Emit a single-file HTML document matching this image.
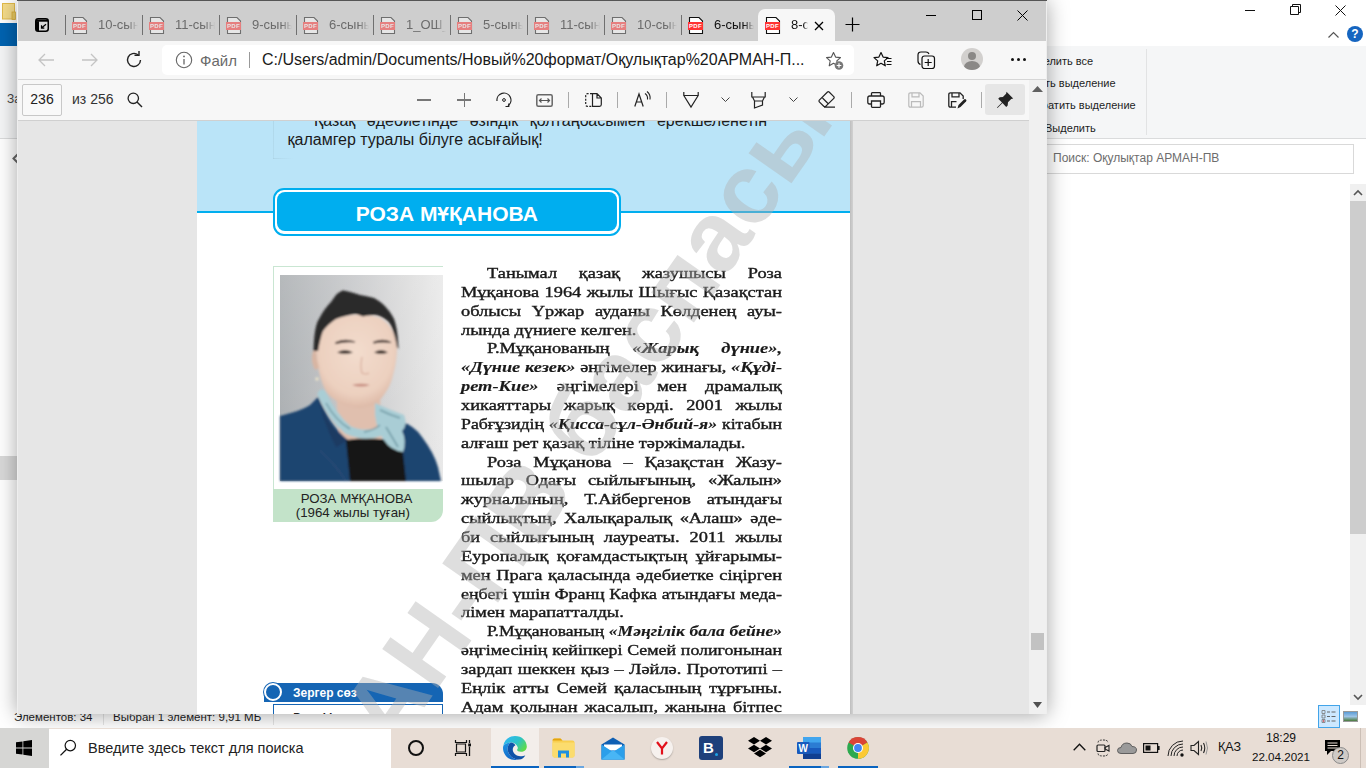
<!DOCTYPE html>
<html><head><meta charset="utf-8"><style>
*{margin:0;padding:0;box-sizing:border-box}
html,body{width:1366px;height:768px;overflow:hidden;background:#fff;font-family:"Liberation Sans",sans-serif;position:relative}
.abs{position:absolute}
svg{position:absolute;overflow:visible}
.sep{position:absolute;width:1px;background:#707070}
.tabt{position:absolute;font-size:13px;white-space:nowrap;overflow:hidden;-webkit-mask-image:linear-gradient(90deg,#000 75%,transparent 100%)}
.bl{position:absolute;font-family:'Liberation Serif',serif;font-size:15.5px;line-height:normal;white-space:nowrap;color:#1a1a1a;transform-origin:0 0;-webkit-text-stroke:0.4px #1a1a1a}
.bl b{-webkit-text-stroke:0.15px #1a1a1a}
.il{position:absolute;font-size:16px;line-height:normal;white-space:nowrap;color:#1a1a1a}
.rtxt{font-size:12px;color:#1e1e1e;position:absolute;white-space:nowrap}
</style></head><body>

<!-- explorer left strip -->
<svg style="left:2px;top:3px" width="14" height="17" viewBox="0 0 14 17"><rect x="0.5" y="0.5" width="12" height="15.5" fill="#f5dc8a" stroke="#e2bb4a"/><rect x="10" y="9" width="3.5" height="7.5" fill="#eacb62" stroke="#d9ad3a" stroke-width="0.8"/></svg>
<div class="abs" style="left:0;top:23px;width:17px;height:23px;background:#0063b1"></div>
<div class="abs" style="left:0;top:46px;width:1366px;height:92px;background:#f5f6f7"></div>
<div class="abs" style="left:0;top:138px;width:1366px;height:1px;background:#dadbdc"></div>
<div class="abs" style="left:7px;top:92px;font-size:12px;color:#444;white-space:nowrap">За</div>
<svg style="left:12px;top:153px" width="7" height="11" viewBox="0 0 7 11"><path d="M6 1L1.5 5.5 6 10" stroke="#666" stroke-width="2" fill="none"/></svg>
<div class="abs" style="left:0;top:456px;width:17px;height:24px;background:#d9d9d9"></div>
<!-- explorer right -->
<div class="abs" style="left:1245px;top:10px;width:10px;height:1px;background:#111"></div>
<svg style="left:1290px;top:4px" width="11" height="11" viewBox="0 0 11 11"><path d="M0.5 2.5h8v8h-8z M2.5 2.5v-2h8v8h-2" stroke="#111" stroke-width="1" fill="none"/></svg>
<svg style="left:1335px;top:5px" width="11" height="11" viewBox="0 0 11 11"><path d="M0.5 0.5l10 10M10.5 0.5l-10 10" stroke="#111" stroke-width="1"/></svg>
<svg style="left:1328px;top:31px" width="11" height="7" viewBox="0 0 11 7"><path d="M0.5 6.5l5-5 5 5" stroke="#555" stroke-width="1.2" fill="none"/></svg>
<div class="abs" style="left:1347px;top:26px;width:16px;height:16px;border-radius:50%;background:#1565c0;color:#fff;font:bold 12px 'Liberation Sans',sans-serif;text-align:center;line-height:16px">?</div>
<div class="rtxt" style="left:1022px;top:55px;font-size:11px">Выделить все</div>
<div class="rtxt" style="left:1025px;top:77px;font-size:11px">Снять выделение</div>
<div class="rtxt" style="left:1027px;top:99px;font-size:11px">Обратить выделение</div>
<div class="rtxt" style="left:1045px;top:122px;font-size:11px">Выделить</div>
<div class="abs" style="left:1146px;top:49px;width:1px;height:86px;background:#e2e3e4"></div>
<div class="abs" style="left:1040px;top:144px;width:314px;height:30px;border:1px solid #d9d9d9;background:#fff"></div>
<div class="abs" style="left:1053px;top:151px;font-size:12px;color:#6d6d6d;white-space:nowrap">Поиск: Оқулықтар АРМАН-ПВ</div>
<div class="abs" style="left:1350px;top:184px;width:16px;height:521px;background:#f0f0f0"></div>
<div class="abs" style="left:1350px;top:201px;width:16px;height:333px;background:#cdcdcd"></div>
<svg style="left:1353px;top:189px" width="10" height="7" viewBox="0 0 10 7"><path d="M1 6l4-4 4 4" stroke="#555" stroke-width="1.6" fill="none"/></svg>
<svg style="left:1353px;top:694px" width="10" height="7" viewBox="0 0 10 7"><path d="M1 1l4 4 4-4" stroke="#555" stroke-width="1.6" fill="none"/></svg>
<div class="abs" style="left:1318px;top:705px;width:22px;height:23px;background:#cce8ff;border:1px solid #42a4e9"></div>
<svg style="left:1321px;top:709px" width="16" height="15" viewBox="0 0 16 15"><path d="M1 1.5h3v3H1zM1 6h3v3H1zM1 10.5h3v3H1z" fill="none" stroke="#777" stroke-width="0.8"/><path d="M6 3h3M10.5 3h4M6 7.5h3M10.5 7.5h4M6 12h3M10.5 12h4" stroke="#666" stroke-width="1"/><rect x="1.8" y="11.3" width="1.4" height="1.4" fill="#d33"/></svg>
<div class="abs" style="left:1343px;top:711px;width:15px;height:11px;border:1px solid #999;background:linear-gradient(#5b9bd5 0,#9dc3e6 50%,#4a7a3a 100%)"></div>

<!-- status bar -->
<div class="abs" style="left:14px;top:711px;font-size:11.5px;color:#1e1e1e;white-space:nowrap">Элементов: 34</div>
<div class="abs" style="left:103px;top:711px;width:1px;height:14px;background:#e5e5e5"></div>
<div class="abs" style="left:113px;top:711px;font-size:11.5px;color:#1e1e1e;white-space:nowrap">Выбран 1 элемент: 9,91 МБ</div>
<div class="abs" style="left:273px;top:711px;width:1px;height:14px;background:#e5e5e5"></div>


<!-- edge window -->
<div class="abs" style="left:17px;top:0;width:1030px;height:714px;background:#e6e6e6;box-shadow:0 1px 20px rgba(0,0,0,.36)"></div>
<div class="abs" style="left:17px;top:0;width:1030px;height:41px;background:#cecece;border-top:1px solid #555"></div>
<!-- tab actions icon -->
<svg style="left:35px;top:18px" width="14" height="14" viewBox="0 0 14 14"><rect x="0.75" y="0.75" width="12.5" height="12.5" rx="2.5" fill="#d9d9d9" stroke="#000" stroke-width="1.5"/><path d="M0.75 3.2V11q0 2.25 2.25 2.25H4V3.2z" fill="#000"/><path d="M1 1.5h12v2.2H1z" fill="#000"/><path d="M11 6.2L6.8 9.8M6.5 7.3v2.8h2.8" stroke="#000" stroke-width="1.2" fill="none"/></svg>
<div class="sep" style="left:65px;top:15px;height:20px"></div>
<svg style="left:72px;top:17px;opacity:0.5" width="16" height="17" viewBox="0 0 16 17"><path d="M1.5 0.5h9.5l3.5 3.5v12.5h-13z" fill="#fff" stroke="#111" stroke-width="1.1"/><rect x="0" y="5" width="15" height="8" fill="#f33"/><text x="7.5" y="11.3" font-size="6" font-weight="bold" fill="#fff" text-anchor="middle" font-family="Liberation Sans" letter-spacing="0.3">PDF</text></svg>
<div class="tabt" style="left:98px;top:17px;width:40px;color:#6b6b6b">10-сын</div>
<div class="sep" style="left:142px;top:15px;height:20px"></div>
<svg style="left:149px;top:17px;opacity:0.5" width="16" height="17" viewBox="0 0 16 17"><path d="M1.5 0.5h9.5l3.5 3.5v12.5h-13z" fill="#fff" stroke="#111" stroke-width="1.1"/><rect x="0" y="5" width="15" height="8" fill="#f33"/><text x="7.5" y="11.3" font-size="6" font-weight="bold" fill="#fff" text-anchor="middle" font-family="Liberation Sans" letter-spacing="0.3">PDF</text></svg>
<div class="tabt" style="left:175px;top:17px;width:40px;color:#6b6b6b">11-сын</div>
<div class="sep" style="left:219px;top:15px;height:20px"></div>
<svg style="left:226px;top:17px;opacity:0.5" width="16" height="17" viewBox="0 0 16 17"><path d="M1.5 0.5h9.5l3.5 3.5v12.5h-13z" fill="#fff" stroke="#111" stroke-width="1.1"/><rect x="0" y="5" width="15" height="8" fill="#f33"/><text x="7.5" y="11.3" font-size="6" font-weight="bold" fill="#fff" text-anchor="middle" font-family="Liberation Sans" letter-spacing="0.3">PDF</text></svg>
<div class="tabt" style="left:252px;top:17px;width:40px;color:#6b6b6b">9-сыны</div>
<div class="sep" style="left:296px;top:15px;height:20px"></div>
<svg style="left:303px;top:17px;opacity:0.5" width="16" height="17" viewBox="0 0 16 17"><path d="M1.5 0.5h9.5l3.5 3.5v12.5h-13z" fill="#fff" stroke="#111" stroke-width="1.1"/><rect x="0" y="5" width="15" height="8" fill="#f33"/><text x="7.5" y="11.3" font-size="6" font-weight="bold" fill="#fff" text-anchor="middle" font-family="Liberation Sans" letter-spacing="0.3">PDF</text></svg>
<div class="tabt" style="left:329px;top:17px;width:40px;color:#6b6b6b">6-сыны</div>
<div class="sep" style="left:373px;top:15px;height:20px"></div>
<svg style="left:380px;top:17px;opacity:0.5" width="16" height="17" viewBox="0 0 16 17"><path d="M1.5 0.5h9.5l3.5 3.5v12.5h-13z" fill="#fff" stroke="#111" stroke-width="1.1"/><rect x="0" y="5" width="15" height="8" fill="#f33"/><text x="7.5" y="11.3" font-size="6" font-weight="bold" fill="#fff" text-anchor="middle" font-family="Liberation Sans" letter-spacing="0.3">PDF</text></svg>
<div class="tabt" style="left:406px;top:17px;width:40px;color:#6b6b6b">1_ОШ_</div>
<div class="sep" style="left:450px;top:15px;height:20px"></div>
<svg style="left:457px;top:17px;opacity:0.5" width="16" height="17" viewBox="0 0 16 17"><path d="M1.5 0.5h9.5l3.5 3.5v12.5h-13z" fill="#fff" stroke="#111" stroke-width="1.1"/><rect x="0" y="5" width="15" height="8" fill="#f33"/><text x="7.5" y="11.3" font-size="6" font-weight="bold" fill="#fff" text-anchor="middle" font-family="Liberation Sans" letter-spacing="0.3">PDF</text></svg>
<div class="tabt" style="left:483px;top:17px;width:40px;color:#6b6b6b">5-сыны</div>
<div class="sep" style="left:527px;top:15px;height:20px"></div>
<svg style="left:534px;top:17px;opacity:0.5" width="16" height="17" viewBox="0 0 16 17"><path d="M1.5 0.5h9.5l3.5 3.5v12.5h-13z" fill="#fff" stroke="#111" stroke-width="1.1"/><rect x="0" y="5" width="15" height="8" fill="#f33"/><text x="7.5" y="11.3" font-size="6" font-weight="bold" fill="#fff" text-anchor="middle" font-family="Liberation Sans" letter-spacing="0.3">PDF</text></svg>
<div class="tabt" style="left:560px;top:17px;width:40px;color:#6b6b6b">11-сын</div>
<div class="sep" style="left:604px;top:15px;height:20px"></div>
<svg style="left:611px;top:17px;opacity:0.5" width="16" height="17" viewBox="0 0 16 17"><path d="M1.5 0.5h9.5l3.5 3.5v12.5h-13z" fill="#fff" stroke="#111" stroke-width="1.1"/><rect x="0" y="5" width="15" height="8" fill="#f33"/><text x="7.5" y="11.3" font-size="6" font-weight="bold" fill="#fff" text-anchor="middle" font-family="Liberation Sans" letter-spacing="0.3">PDF</text></svg>
<div class="tabt" style="left:637px;top:17px;width:40px;color:#6b6b6b">10-сын</div>
<div class="sep" style="left:681px;top:15px;height:20px"></div>
<svg style="left:688px;top:17px;opacity:1" width="16" height="17" viewBox="0 0 16 17"><path d="M1.5 0.5h9.5l3.5 3.5v12.5h-13z" fill="#fff" stroke="#111" stroke-width="1.1"/><rect x="0" y="5" width="15" height="8" fill="#f33"/><text x="7.5" y="11.3" font-size="6" font-weight="bold" fill="#fff" text-anchor="middle" font-family="Liberation Sans" letter-spacing="0.3">PDF</text></svg>
<div class="tabt" style="left:714px;top:17px;width:40px;color:#111">6-сыны</div>
<!-- active tab -->
<div class="abs" style="left:758px;top:9px;width:77px;height:33px;background:#f7f7f7;border-radius:7px 7px 0 0"></div>
<svg style="left:765px;top:17px;opacity:1" width="16" height="17" viewBox="0 0 16 17"><path d="M1.5 0.5h9.5l3.5 3.5v12.5h-13z" fill="#fff" stroke="#111" stroke-width="1.1"/><rect x="0" y="5" width="15" height="8" fill="#f33"/><text x="7.5" y="11.3" font-size="6" font-weight="bold" fill="#fff" text-anchor="middle" font-family="Liberation Sans" letter-spacing="0.3">PDF</text></svg>
<div class="tabt" style="left:791px;top:17px;width:17px;color:#111">8-сын</div>
<svg style="left:814px;top:21px" width="10" height="10" viewBox="0 0 10 10"><path d="M1 1L9 9M9 1L1 9" stroke="#000" stroke-width="1.3"/></svg>
<svg style="left:845px;top:17px" width="15" height="15" viewBox="0 0 15 15"><path d="M7.5 0.5v14M0.5 7.5h14" stroke="#000" stroke-width="1.2"/></svg>
<!-- window controls -->
<div class="abs" style="left:926px;top:15px;width:10px;height:1px;background:#000"></div>
<div class="abs" style="left:972px;top:10px;width:10px;height:10px;border:1px solid #000"></div>
<svg style="left:1017px;top:10px" width="11" height="11" viewBox="0 0 11 11"><path d="M0.5 0.5L10.5 10.5M10.5 0.5L0.5 10.5" stroke="#000" stroke-width="1"/></svg>

<!-- toolbar -->
<div class="abs" style="left:17px;top:41px;width:1030px;height:39px;background:#f7f7f7;border-bottom:1px solid #d6d6d6"></div>
<svg style="left:37px;top:52px" width="18" height="16" viewBox="0 0 18 16"><path d="M17 8H2M8 2L2 8l6 6" stroke="#c4c4c4" stroke-width="1.3" fill="none"/></svg>
<svg style="left:81px;top:52px" width="18" height="16" viewBox="0 0 18 16"><path d="M1 8h15M10 2l6 6-6 6" stroke="#c4c4c4" stroke-width="1.3" fill="none"/></svg>
<svg style="left:125px;top:51px" width="18" height="18" viewBox="0 0 18 18"><path d="M15.5 9A6.5 6.5 0 1 1 13 3.8" stroke="#222" stroke-width="1.4" fill="none"/><path d="M9.5 2.8h4.5v-4.3" stroke="#222" stroke-width="1.4" fill="none" transform="translate(0,1.5)"/></svg>
<div class="abs" style="left:162px;top:45px;width:692px;height:30px;background:#fff;border-radius:5px"></div>
<svg style="left:175px;top:51px" width="18" height="18" viewBox="0 0 18 18"><circle cx="9" cy="9" r="7.7" stroke="#666" stroke-width="1.1" fill="none"/><path d="M9 8v5.5" stroke="#666" stroke-width="1.3"/><circle cx="9" cy="5.4" r="0.9" fill="#666"/></svg>
<div class="abs" style="left:200px;top:52px;font-size:15px;color:#6a6a6a;white-space:nowrap">Файл</div>
<div class="abs" style="left:249px;top:52px;width:1px;height:16px;background:#999"></div>
<div class="abs" style="left:262px;top:51px;font-size:16px;color:#1a1a1a;white-space:nowrap">C:/Users/admin/Documents/Новый%20формат/Оқулықтар%20АРМАН-П...</div>
<svg style="left:825px;top:51px" width="20" height="20" viewBox="0 0 20 20"><path d="M8.5 1.5l2.1 4.6 4.9.5-3.7 3.3 1 4.9-4.3-2.5-4.3 2.5 1-4.9L1.5 6.6l4.9-.5z" stroke="#555" stroke-width="1.1" fill="none" stroke-linejoin="round"/><circle cx="14" cy="14.5" r="4.3" fill="#777"/><path d="M14 12.2v4.6M11.7 14.5h4.6" stroke="#fff" stroke-width="1.2"/></svg>
<svg style="left:873px;top:51px" width="20" height="20" viewBox="0 0 20 20"><path d="M8 1.5l2.1 4.6 4.9.5-3.7 3.3 1 4.9L8 12.3l-4.3 2.5 1-4.9L1 6.6l4.9-.5z" stroke="#111" stroke-width="1.2" fill="none" stroke-linejoin="round"/><path d="M13 7.5h5.5M14 10.5h4.5M13.5 13.5h5" stroke="#111" stroke-width="1.2"/></svg>
<svg style="left:917px;top:51px" width="20" height="20" viewBox="0 0 20 20"><path d="M3.5 13.5c-1.5-.5-2.5-1.5-2.5-3.5V4c0-2 1-3 3-3h5c1.5 0 2.5.7 3 2" stroke="#111" stroke-width="1.2" fill="none"/><rect x="5" y="5" width="12.5" height="12.5" rx="2.5" stroke="#111" stroke-width="1.2" fill="none"/><path d="M11.2 8v7M7.7 11.5h7" stroke="#111" stroke-width="1.2"/></svg>
<div class="abs" style="left:961px;top:48px;width:22px;height:22px;border-radius:50%;background:#d2d0ce;overflow:hidden">
  <div class="abs" style="left:7px;top:4px;width:8px;height:8px;border-radius:50%;background:#8a8886"></div>
  <div class="abs" style="left:3px;top:13px;width:16px;height:12px;border-radius:50%;background:#8a8886"></div>
</div>
<div class="abs" style="left:1011px;top:58px;width:3px;height:3px;background:#111;border-radius:50%"></div>
<div class="abs" style="left:1017px;top:58px;width:3px;height:3px;background:#111;border-radius:50%"></div>
<div class="abs" style="left:1023px;top:58px;width:3px;height:3px;background:#111;border-radius:50%"></div>

<div class="abs" style="left:17px;top:80px;width:1012px;height:41px;background:#f7f7f7;border-bottom:1px solid #d0d0d0"></div>
<div class="abs" style="left:1029px;top:80px;width:17px;height:634px;background:#f0f0f0"></div>
<svg style="left:1032px;top:85px" width="11" height="8" viewBox="0 0 11 8"><path d="M0 7L5.5 1 11 7z" fill="#606060"/></svg>
<svg style="left:1033px;top:702px" width="9" height="6" viewBox="0 0 9 6"><path d="M0 0L4.5 6 9 0z" fill="#505050"/></svg>
<div class="abs" style="left:1031px;top:633px;width:13px;height:17px;background:#c2c2c2"></div>
<div class="abs" style="left:22px;top:84px;width:40px;height:32px;border:1px solid #c8c8c8;border-radius:2px;background:#f9f9f9"></div>
<div class="abs" style="left:22px;top:91px;width:40px;text-align:center;font-size:14px;color:#222">236</div>
<div class="abs" style="left:72px;top:91px;font-size:14px;color:#333;white-space:nowrap">из 256</div>
<svg style="left:127px;top:92px" width="16" height="16" viewBox="0 0 16 16"><circle cx="6.3" cy="6.3" r="5.2" stroke="#222" stroke-width="1.3" fill="none"/><path d="M10 10l5 5" stroke="#222" stroke-width="1.4"/></svg>
<div class="abs" style="left:417px;top:99px;width:14px;height:1.5px;background:#777"></div>
<div class="abs" style="left:457px;top:99px;width:14px;height:1.5px;background:#777"></div>
<div class="abs" style="left:463.5px;top:93px;width:1.5px;height:14px;background:#777"></div>
<svg style="left:496px;top:92px" width="16" height="17" viewBox="0 0 16 17"><path d="M1 9A7 7 0 1 1 12 13.8" stroke="#222" stroke-width="1.2" fill="none"/><path d="M9.5 14.5h3.3v-3" stroke="#222" stroke-width="1.2" fill="none"/><circle cx="8" cy="8" r="1.4" stroke="#222" stroke-width="1" fill="none"/></svg>
<svg style="left:536px;top:94px" width="17" height="13" viewBox="0 0 17 13"><rect x="0.8" y="0.8" width="15.4" height="11.4" rx="1.5" stroke="#666" stroke-width="1.5" fill="none"/><path d="M3.5 6.5h10M5.5 4.5l-2 2 2 2M11.5 4.5l2 2-2 2" stroke="#555" stroke-width="1.2" fill="none"/></svg>
<div class="sep" style="left:568px;top:92px;height:16px;background:#aaa"></div>
<svg style="left:585px;top:93px" width="17" height="14" viewBox="0 0 17 14"><path d="M7 0.7H2.5Q0.7 .7 .7 2.5v9Q.7 13.3 2.5 13.3H7" stroke="#222" stroke-width="1.2" fill="none" stroke-dasharray="2 1.4"/><path d="M7.5 0.7h4.5l4.3 4.3v6.5q0 1.8-1.8 1.8H7.5z M12 0.7v4.3h4.3" stroke="#222" stroke-width="1.2" fill="none"/></svg>
<div class="sep" style="left:617px;top:92px;height:16px;background:#aaa"></div>
<svg style="left:634px;top:91px" width="17" height="16" viewBox="0 0 17 16"><path d="M0.8 15.5L5 3l4.2 12.5M2.2 11h5.6" stroke="#222" stroke-width="1.2" fill="none"/><path d="M11 2.5q3 2 2.5 6M13 0.5q3.8 3 3 8" stroke="#222" stroke-width="1.1" fill="none"/></svg>
<div class="sep" style="left:666px;top:92px;height:16px;background:#aaa"></div>
<svg style="left:683px;top:92px" width="16" height="16" viewBox="0 0 16 16"><path d="M0.8 0v3.5h14.4V0M0.8 3.5L8 15 15.2 3.5" stroke="#222" stroke-width="1.2" fill="none"/></svg>
<svg style="left:721px;top:97px" width="9" height="6" viewBox="0 0 9 6"><path d="M0.5 0.5l4 4 4-4" stroke="#444" stroke-width="1" fill="none"/></svg>
<svg style="left:751px;top:92px" width="15" height="17" viewBox="0 0 15 17"><path d="M0.8 0v5h13.4V0M1.5 5l2 4h8l2-4M3.5 9v7l8-3V9" stroke="#222" stroke-width="1.2" fill="none"/></svg>
<svg style="left:789px;top:97px" width="9" height="6" viewBox="0 0 9 6"><path d="M0.5 0.5l4 4 4-4" stroke="#444" stroke-width="1" fill="none"/></svg>
<svg style="left:818px;top:91px" width="18" height="17" viewBox="0 0 18 17"><path d="M6 15.5L1.3 10.8q-.8-.8 0-1.6L9.5 1q.8-.8 1.6 0l4.7 4.7q.8.8 0 1.6L7.6 15.5zM4.5 7l6 6M6 16.2h11" stroke="#222" stroke-width="1.2" fill="none"/></svg>
<div class="sep" style="left:851px;top:92px;height:16px;background:#aaa"></div>
<svg style="left:867px;top:92px" width="18" height="16" viewBox="0 0 18 16"><path d="M4.5 4V1.5q0-.8.8-.8h7.4q.8 0 .8.8V4M4.5 12H2.5Q.8 12 .8 10.3V6q0-2 2-2h12.4q2 0 2 2v4.3q0 1.7-1.7 1.7h-2M4.5 9h9v5.5q0 .8-.8.8H5.3q-.8 0-.8-.8z" stroke="#222" stroke-width="1.3" fill="none"/></svg>
<svg style="left:908px;top:92px" width="16" height="16" viewBox="0 0 16 16"><path d="M2.5 .8h9.5l3.2 3.2v9.5q0 1.7-1.7 1.7h-11Q.8 15.2.8 13.5v-11Q.8.8 2.5.8zM4 .8v4h7v-4M3.5 15.2v-5.5h9v5.5" stroke="#bbb" stroke-width="1.2" fill="none"/></svg>
<svg style="left:948px;top:92px" width="18" height="17" viewBox="0 0 18 17"><path d="M8 15.2H2.5Q.8 15.2.8 13.5v-11Q.8.8 2.5.8h9.5l3.2 3.2v3M4 .8v4h7v-4M3.5 15.2v-5.5h5" stroke="#222" stroke-width="1.3" fill="none"/><path d="M9.5 16.5l1-3.5 5.5-5.5q1-1 2 0t0 2l-5.5 5.5z" fill="#222"/></svg>
<div class="sep" style="left:981px;top:92px;height:16px;background:#aaa"></div>
<div class="abs" style="left:985px;top:84px;width:40px;height:31px;background:#e6e6e6;border-radius:3px"></div>
<svg style="left:996px;top:91px" width="18" height="18" viewBox="0 0 18 18"><path d="M10.5 0.8l6.7 6.7-2 .6-3.2 3.2-.3 3.2-1.5 1.5L6.5 12 1.5 17l-.5-.5L6 11.5 2.2 7.7 3.7 6.2l3.2-.3 3.2-3.2z" fill="#222"/></svg>

<div class="abs" style="left:194px;top:121px;width:659px;height:593px;background:linear-gradient(90deg,rgba(0,0,0,0) 0,rgba(0,0,0,.09) 100%);"></div>
<div class="abs" style="left:850px;top:121px;width:3px;height:593px;background:linear-gradient(90deg,rgba(0,0,0,.09),rgba(0,0,0,0))"></div>
<div class="abs" style="left:197px;top:121px;width:653px;height:593px;background:#fff;overflow:hidden">
<div class="abs" style="left:0;top:0;width:653px;height:90px;background:#bae4f8"></div>
<div class="abs" style="left:0;top:90px;width:653px;height:2px;background:#00aeef"></div>
<div class="abs" style="left:76px;top:-20px;width:1px;height:58px;background:linear-gradient(rgba(150,185,200,.35),rgba(150,185,200,.2))"></div>
<div class="abs" style="left:76px;top:37px;width:20px;height:1px;background:linear-gradient(90deg,rgba(150,185,200,.3),rgba(150,185,200,0))"></div>
<div class="il" style="left:117px;top:-9.48px;width:453.0px;text-align:justify;text-align-last:justify">Қазақ әдебиетінде өзіндік қолтаңбасымен ерекшеленетін</div>
<div class="il" style="left:90.5px;top:10.02px">қаламгер туралы білуге асығайық!</div>
<div class="abs" style="left:75.5px;top:66.5px;width:348px;height:48px;border:2px solid #00aeef;border-radius:11px;background:#fff"></div>
<div class="abs" style="left:80px;top:71px;width:339.5px;height:39px;background:#00aeef;border-radius:8px"></div>
<div class="abs" style="left:80px;top:81.19px;width:339.5px;text-align:center;font:bold 21px 'Liberation Sans',sans-serif;color:#fff;line-height:normal">РОЗА МҰҚАНОВА</div>
<div class="abs" style="left:75.5px;top:145px;width:170px;height:224px;border-top:1.5px solid #c9e6d2;border-left:1.5px solid #c9e6d2"></div>
<svg style="left:83px;top:154px" width="163" height="206" viewBox="0 0 163 206">
<defs>
<linearGradient id="bg" x1="0" y1="0" x2="1" y2="0"><stop offset="0" stop-color="#a9adb0"/><stop offset="0.5" stop-color="#c8c9cb"/><stop offset="0.8" stop-color="#dcdcdc"/><stop offset="1" stop-color="#e9e9e9"/></linearGradient>
<linearGradient id="bgv" x1="0" y1="0" x2="0" y2="1"><stop offset="0" stop-color="#fff" stop-opacity="0.15"/><stop offset="1" stop-color="#fff" stop-opacity="0"/></linearGradient>
<radialGradient id="skin" cx="0.5" cy="0.4" r="0.65"><stop offset="0" stop-color="#f3dccd"/><stop offset="0.7" stop-color="#ecd0bf"/><stop offset="1" stop-color="#d9b3a0"/></radialGradient>
<filter id="blr" x="-5%" y="-5%" width="110%" height="110%"><feGaussianBlur stdDeviation="0.9"/></filter>
</defs>
<rect width="163" height="206" fill="url(#bg)"/>
<rect width="163" height="206" fill="url(#bgv)"/>
<g filter="url(#blr)">
<path d="M56 118 L60 168 L102 168 L100 118z" fill="#e0bfae"/>
<path d="M36 76 C37 92 41 108 47 118 C55 127 66 132 80 133 C88 132 93 130 97 128 C105 120 111 110 113 100 C116 90 117 80 117 72 C116 60 110 48 100 43 C90 39 70 38 56 44 C46 50 38 60 36 76 Z" fill="url(#skin)"/>
<path d="M33.5 76 C34 58 36 48 39 44 C43 36 47 31 51 27 C54 23 56 19 59 17.5 C62 15 64 15 66 16 C72 17 76 19 80 20 C86 21 90 22 94 23 C100 26 104 30 107 33.5 C110 37 112 40 114 44 C117 52 118 62 118.5 74 L117 72.5 C116 66 115 62 114 59 C112 52 110 48 107 45.6 C103 42 98 40 94 40 C90 40 86 41 83 41.6 C80 40.5 78 39 75 39 C68 40 61 42 56 44 C50 48 46 52 43 56 C41 61 40 66 38 76 Z" fill="#2c2a2b"/>
<path d="M33 76 Q30 86 35 95 L39 93 Q36 84 36 76z" fill="#d8b5a3"/>
<circle cx="37" cy="104" r="1.8" fill="#e8e0c8"/>
<path d="M56 67.5 Q65 63.5 75 67 Q65 66 56 68.5z M94 67 Q103 63.5 111 67.5 Q102 66 94 68z" fill="#4a3a34" stroke="#4a3a34" stroke-width="1.2"/>
<path d="M57 77.5 Q65 73 73 77.5 Q65 80 57 77.5z M94 77.5 Q101 73 108 77.5 Q101 80 94 77.5z" fill="#2a201d"/>
<path d="M82 82 Q80 92 82 98 Q86 100 89 98" stroke="#d6ac9a" stroke-width="1.1" fill="none"/>
<path d="M72 110 Q81 107.5 90 110 Q81 113 72 110z" fill="#c88d80"/>
<path d="M0 141 C12 138 24 134 30 130 L38 122 C46 140 56 156 68 165 L72 206 L0 206 Z" fill="#1f4570"/>
<path d="M38 122 C44 142 54 158 68 165 L56 172 C50 160 42 142 38 122z" fill="#1a3a62"/>
<path d="M40 176 Q56 190 66 206" stroke="#2d4d78" stroke-width="1.4" fill="none"/>
<path d="M119 146 Q134 150 142 162 Q154 178 158 192 L161 206 L124 206 Q121 180 120 170z" fill="#1f4570"/>
<path d="M66 165 Q96 161 122 168 L126 206 L70 206z" fill="#121314"/>
<path d="M42 119 Q52 141 68 155 Q84 162 99 157" stroke="#a9cdd5" stroke-width="9" fill="none" stroke-linecap="round"/>
<path d="M95 128 Q110 135 124 140 Q128 150 122 156 Q127 166 123 177 Q110 175 104 165 Q97 156 95 140 Z" fill="#a9cdd5"/>
<path d="M46 128 Q56 146 70 154 M84 157 Q94 155 100 150 M106 152 Q112 162 118 172 M100 135 Q110 140 120 143" stroke="#5d8a96" stroke-width="1.5" fill="none" opacity="0.75"/>
</g>
</svg>
<div class="abs" style="left:75.5px;top:368px;width:170px;height:33px;background:#c3e3c9;border-radius:0 0 12px 0"></div>
<div class="abs" style="left:77px;top:369.71px;width:165px;text-align:center;font-size:13.25px;color:#222;line-height:normal">РОЗА МҰҚАНОВА</div>
<div class="abs" style="left:73.30000000000001px;top:384.31px;width:165px;text-align:center;font-size:13.3px;color:#222;line-height:normal">(1964 жылы туған)</div>
<!-- zerger soz -->
<div class="abs" style="left:67px;top:562px;width:179px;height:19px;background:#1565b4;border-radius:9px 11px 0 0"></div>
<div class="abs" style="left:67px;top:562px;width:18px;height:18px;border-radius:50%;background:#1565b4;border:2.5px solid #fff;box-shadow:0 0 0 1px #1565b4"></div>
<div class="abs" style="left:96px;top:565.14px;font:bold 12px 'Liberation Sans',sans-serif;color:#fff;white-space:nowrap;line-height:normal">Зергер сөз</div>
<div class="abs" style="left:76px;top:583px;width:170px;height:40px;border:1.5px solid #1565b4;border-bottom:0"></div>
<div class="abs" style="left:96px;top:590px;font-size:12px;color:#222;white-space:nowrap;line-height:normal">Роза Мұқанова</div>
<div class="bl" style="left:290px;top:142.99px;width:248.95px;transform:scaleX(1.1850);text-align:justify;text-align-last:justify;">Танымал қазақ жазушысы Роза</div>
<div class="bl" style="left:264px;top:161.85px;width:270.89px;transform:scaleX(1.1850);text-align:justify;text-align-last:justify;">Мұқанова 1964 жылы Шығыс Қазақстан</div>
<div class="bl" style="left:264px;top:180.71px;width:270.89px;transform:scaleX(1.1850);text-align:justify;text-align-last:justify;">облысы Үржар ауданы Көлденең ауы-</div>
<div class="bl" style="left:264px;top:199.57px;width:270.89px;transform:scaleX(1.1850);">лында дүниеге келген.</div>
<div class="bl" style="left:290px;top:218.43px;width:248.95px;transform:scaleX(1.1850);text-align:justify;text-align-last:justify;">Р.Мұқанованың <b><i>«Жарық дүние»,</i></b></div>
<div class="bl" style="left:264px;top:237.29px;width:272.02px;transform:scaleX(1.1801);text-align:justify;text-align-last:justify;"><b><i>«Дүние кезек»</i></b> әңгімелер жинағы, <b><i>«Құді-</i></b></div>
<div class="bl" style="left:264px;top:256.15px;width:270.89px;transform:scaleX(1.1850);text-align:justify;text-align-last:justify;"><b><i>рет-Кие»</i></b> әңгімелері мен драмалық</div>
<div class="bl" style="left:264px;top:275.01px;width:270.89px;transform:scaleX(1.1850);text-align:justify;text-align-last:justify;">хикаяттары жарық көрді. 2001 жылы</div>
<div class="bl" style="left:264px;top:293.87px;width:279.84px;transform:scaleX(1.1471);text-align:justify;text-align-last:justify;">Рабғұзидің <b><i>«Қисса-сұл-Әнбий-я»</i></b> кітабын</div>
<div class="bl" style="left:264px;top:312.73px;width:270.89px;transform:scaleX(1.1850);">алғаш рет қазақ тіліне тәржімалады.</div>
<div class="bl" style="left:290px;top:331.59px;width:248.95px;transform:scaleX(1.1850);text-align:justify;text-align-last:justify;">Роза Мұқанова – Қазақстан Жазу-</div>
<div class="bl" style="left:264px;top:350.45px;width:270.89px;transform:scaleX(1.1850);text-align:justify;text-align-last:justify;">шылар Одағы сыйлығының, «Жалын»</div>
<div class="bl" style="left:264px;top:369.31px;width:270.89px;transform:scaleX(1.1850);text-align:justify;text-align-last:justify;">журналының, Т.Айбергенов атындағы</div>
<div class="bl" style="left:264px;top:388.17px;width:270.89px;transform:scaleX(1.1850);text-align:justify;text-align-last:justify;">сыйлықтың, Халықаралық «Алаш» әде-</div>
<div class="bl" style="left:264px;top:407.03px;width:270.89px;transform:scaleX(1.1850);text-align:justify;text-align-last:justify;">би сыйлығының лауреаты. 2011 жылы</div>
<div class="bl" style="left:264px;top:425.89px;width:270.89px;transform:scaleX(1.1850);text-align:justify;text-align-last:justify;">Еуропалық қоғамдастықтың ұйғарымы-</div>
<div class="bl" style="left:264px;top:444.75px;width:270.89px;transform:scaleX(1.1850);text-align:justify;text-align-last:justify;">мен Прага қаласында әдебиетке сіңірген</div>
<div class="bl" style="left:264px;top:463.61px;width:277.53px;transform:scaleX(1.1566);text-align:justify;text-align-last:justify;">еңбегі үшін Франц Кафка атындағы меда-</div>
<div class="bl" style="left:264px;top:482.47px;width:270.89px;transform:scaleX(1.1850);">лімен марапатталды.</div>
<div class="bl" style="left:290px;top:501.33px;width:260.78px;transform:scaleX(1.1312);text-align:justify;text-align-last:justify;">Р.Мұқанованың <b><i>«Мәңгілік бала бейне»</i></b></div>
<div class="bl" style="left:264px;top:520.19px;width:278.64px;transform:scaleX(1.1520);text-align:justify;text-align-last:justify;">әңгімесінің кейіпкері Семей полигонынан</div>
<div class="bl" style="left:264px;top:539.05px;width:270.89px;transform:scaleX(1.1850);text-align:justify;text-align-last:justify;">зардап шеккен қыз – Ләйлә. Прототипі –</div>
<div class="bl" style="left:264px;top:557.91px;width:270.89px;transform:scaleX(1.1850);text-align:justify;text-align-last:justify;">Еңлік атты Семей қаласының тұрғыны.</div>
<div class="bl" style="left:264px;top:576.77px;width:270.89px;transform:scaleX(1.1850);text-align:justify;text-align-last:justify;">Адам қолынан жасалып, жанына бітпес</div>
<div class="abs" id="wm" style="left:0;top:0;width:653px;height:593px;pointer-events:none">
<div class="abs" style="left:1.5px;top:761.6px;font:bold 99px 'Liberation Sans',sans-serif;color:rgba(176,176,176,.42);white-space:nowrap;transform-origin:0 0;transform:rotate(-55deg);line-height:1">АРМАН-ПВ баспасы</div>
</div>
</div>
<div class="abs" style="left:17px;top:1px;width:1px;height:713px;background:#eeeeee"></div><div class="abs" style="left:1046px;top:1px;width:1px;height:713px;background:#eeeeee"></div>
<div class="abs" style="left:0;top:728px;width:1366px;height:40px;background:#e8ddd5"></div>
<div class="abs" style="left:0;top:728px;width:49px;height:40px;background:#d6d6d4"></div>
<svg style="left:16px;top:740px" width="16" height="16" viewBox="0 0 16 16"><path d="M0 2.3l6.5-.9v6.2H0zM7.3 1.3L16 0v7.6H7.3zM0 8.4h6.5v6.2L0 13.7zM7.3 8.4H16V16l-8.7-1.2z" fill="#000"/></svg>
<div class="abs" style="left:49px;top:729px;width:342px;height:39px;background:#fff"></div>
<svg style="left:59px;top:739px" width="18" height="18" viewBox="0 0 18 18"><circle cx="11.3" cy="6.6" r="5.2" stroke="#111" stroke-width="1.2" fill="none"/><path d="M7.6 10.3L1.5 16.4" stroke="#111" stroke-width="1.3"/></svg>
<div class="abs" style="left:88px;top:739.5px;font-size:14.5px;color:#222;white-space:nowrap">Введите здесь текст для поиска</div>
<div class="abs" style="left:408px;top:740px;width:16px;height:16px;border-radius:50%;border:2px solid #111"></div>
<svg style="left:455px;top:740px" width="17" height="16" viewBox="0 0 17 16"><path d="M0.5 0v2.5h11V0M0.5 16v-2.5h11V16M1.5 4h9v8h-9z" stroke="#111" stroke-width="1.2" fill="none"/><path d="M14.5 0v3M14.5 6.5v9.5" stroke="#111" stroke-width="1.3"/><rect x="13.2" y="3.5" width="2.8" height="2.8" fill="#111"/></svg>

<div class="abs" style="left:491px;top:728px;width:48px;height:40px;background:#f3eeea"></div>
<div class="abs" style="left:491px;top:766px;width:48px;height:2px;background:#0a64c0"></div>
<div class="abs" style="left:544px;top:766px;width:32px;height:2px;background:#0a64c0"></div><div class="abs" style="left:576px;top:766px;width:8px;height:2px;background:#6aa6e0"></div>
<div class="abs" style="left:789px;top:766px;width:32px;height:2px;background:#0a64c0"></div><div class="abs" style="left:821px;top:766px;width:8px;height:2px;background:#6aa6e0"></div>
<div class="abs" style="left:838px;top:766px;width:40px;height:2px;background:#0a64c0"></div>
<!-- edge icon -->
<svg style="left:503px;top:736px" width="24" height="24" viewBox="0 0 24 24"><defs><linearGradient id="eg1" x1="0.1" y1="0.2" x2="1" y2="0.7"><stop offset="0" stop-color="#30b9ee"/><stop offset="0.5" stop-color="#2cc2c8"/><stop offset="1" stop-color="#5fdc45"/></linearGradient><linearGradient id="eg2" x1="0" y1="0" x2="0.4" y2="1"><stop offset="0" stop-color="#1e94e4"/><stop offset="1" stop-color="#1169c8"/></linearGradient></defs>
<path d="M0.3 10C1 4 6 0 12 0 19 0 23.8 5 23.8 10.5 23.8 14 21 15.8 18 15.8 15.5 15.8 14 14.8 14 13.8 14.8 13 15 12 14.6 11 13.8 8.5 11 6.6 8 6.6 4.5 6.6 1.5 8 .3 10z" fill="url(#eg1)"/>
<path d="M0.3 10C1.5 8 4.5 6.6 8 6.6 5 8 4 12 5 15.5 6.5 20.5 11 23.6 16 23.6 14.5 24 13 24 12 24 5.3 24 0 18.7 0 12 0 11.3.1 10.6.3 10z" fill="url(#eg2)"/>
<path d="M8 6.6C5 8 4 12 5 15.5 6.5 20.5 11 23.6 16 23.6 19 23.6 21.5 21.5 22.3 19.3 21 20 19 20.4 17.3 20.3 13.5 20 10.5 17.8 9.9 14.8 9.4 12.4 10.3 10.4 12.4 9.3 11.3 7.6 9.8 6.6 8 6.6z" fill="#0f52a8"/>
</svg>
<!-- explorer icon -->
<svg style="left:552px;top:738px" width="23" height="20" viewBox="0 0 23 20"><path d="M0.5 2.5q0-2 2-2h6l2 2h10q2 0 2 2v13q0 2-2 2h-18q-2 0-2-2z" fill="#f8cf4f"/><path d="M0.5 2.5q0-2 2-2h6l2 2H.5z" fill="#e4a40e"/><path d="M.5 4.5h22v13q0 2-2 2h-18q-2 0-2-2z" fill="#fbdc6e"/><path d="M6 19.5v-7h11v7h-3v-4h-5v4z" fill="#1e8fe0"/></svg>
<!-- mail icon -->
<svg style="left:601px;top:737px" width="24" height="23" viewBox="0 0 24 23"><path d="M12 0.5L.5 7.5v15h23v-15z" fill="#0f5fb3"/><path d="M3 7.5h18v6H3z" fill="#fff"/><path d="M.5 7.5L12 15 23.5 7.5v15H.5z" fill="#2b9fea"/><path d="M.5 22.5L12 13l11.5 9.5z" fill="#48b6f5"/></svg>
<!-- yandex -->
<div class="abs" style="left:651px;top:737px;width:22px;height:22px;border-radius:50%;background:#f6f1ee;box-shadow:0 1px 1.5px rgba(0,0,0,.25)"></div>
<svg style="left:655px;top:741px" width="14" height="14" viewBox="0 0 14 14"><path d="M2 1l5 6.5L12 1M7 7.5V13.5" stroke="#e2111b" stroke-width="2.2" fill="none"/></svg>
<!-- booking -->
<div class="abs" style="left:699px;top:736px;width:24px;height:24px;border-radius:3px;background:#1e407b"></div>
<div class="abs" style="left:703px;top:739px;font:bold 15px 'Liberation Sans',sans-serif;color:#fff;line-height:18px">B</div>
<div class="abs" style="left:715px;top:753px;width:3px;height:3px;border-radius:50%;background:#1ea2e5"></div>
<!-- dropbox -->
<svg style="left:748px;top:737px" width="24" height="21" viewBox="0 0 24 21"><path d="M6 0l6 3.8-6 3.8L0 3.8zM18 0l6 3.8-6 3.8-6-3.8zM0 11.5l6-3.8 6 3.8-6 3.8zM24 11.5l-6-3.8-6 3.8 6 3.8zM6 16.5l6-3.8 6 3.8-6 3.8z" fill="#000"/></svg>
<!-- word -->
<svg style="left:797px;top:737px" width="25" height="22" viewBox="0 0 25 22"><rect x="6" y="0" width="18" height="22" rx="1" fill="#2b7cd3"/><rect x="6" y="0" width="18" height="5.5" fill="#41a5ee"/><rect x="6" y="11" width="18" height="5.5" fill="#185abd"/><rect x="6" y="16.5" width="18" height="5.5" fill="#103f91"/><rect x="0" y="5" width="12.5" height="12" rx="1" fill="#185abd"/><text x="6.2" y="15" font-size="10" font-weight="bold" fill="#fff" text-anchor="middle" font-family="Liberation Sans">W</text></svg>
<!-- chrome -->
<svg style="left:847px;top:737px" width="22" height="22" viewBox="0 0 22 22"><circle cx="11" cy="11" r="10.8" fill="#2da94f"/><path d="M11 11L1.6 5.6A10.8 10.8 0 0 1 20.4 5.6z" fill="#db4437"/><path d="M11 11L20.4 5.6A10.8 10.8 0 0 1 11 21.8z" fill="#fcc934"/><circle cx="11" cy="11" r="5" fill="#fff"/><circle cx="11" cy="11" r="3.9" fill="#4285f4"/></svg>

<svg style="left:1073px;top:743px" width="13" height="8" viewBox="0 0 13 8"><path d="M0.7 7.3l5.8-6 5.8 6" stroke="#111" stroke-width="1.3" fill="none"/></svg>
<svg style="left:1096px;top:739px" width="14" height="18" viewBox="0 0 14 18"><path d="M2 3.5Q2 1 7 1t5 2.5M2 14.5q0 2.5 5 2.5t5-2.5" stroke="#333" stroke-width="1" fill="none" stroke-dasharray="2 1"/><rect x="1" y="6" width="8" height="6.5" rx="1" stroke="#222" stroke-width="1.2" fill="none"/><path d="M9 8.5l4-2v5.5l-4-2z" stroke="#222" stroke-width="1.1" fill="none"/></svg>
<svg style="left:1117px;top:742px" width="20" height="12" viewBox="0 0 20 12"><path d="M4 11.5Q.5 11.5.5 8.5 .5 5.5 4 5.5 5 1 10 1q4 0 5 3.5 4.5 0 4.5 3.5t-3.5 3.5z" fill="#9a9a9a" stroke="#555" stroke-width="0.9"/></svg>
<svg style="left:1143px;top:743px" width="17" height="10" viewBox="0 0 17 10"><rect x="0.6" y="0.6" width="14" height="8.8" stroke="#111" stroke-width="1.2" fill="none"/><rect x="2.5" y="2.5" width="5" height="5" fill="#111"/><rect x="14.6" y="3" width="2" height="4" fill="#111"/></svg>
<svg style="left:1167px;top:740px" width="17" height="17" viewBox="0 0 17 17"><path d="M1 16A15 15 0 0 1 16 1M4 16A12 12 0 0 1 16 4M7 16a9 9 0 0 1 9-9M10 16a6 6 0 0 1 6-6" stroke="#222" stroke-width="1" fill="none"/><circle cx="15" cy="15" r="1.7" fill="#111"/></svg>
<svg style="left:1190px;top:740px" width="18" height="16" viewBox="0 0 18 16"><path d="M1 5.5h3l4.5-4v13L4 10.5H1z" stroke="#222" stroke-width="1.1" fill="none"/><path d="M11 5q1.5 3 0 6M13.5 3q2.5 5 0 10" stroke="#222" stroke-width="1.1" fill="none"/><path d="M16 1.5q3 6.5 0 13" stroke="#999" stroke-width="1" fill="none"/></svg>
<div class="abs" style="left:1218px;top:740px;font-size:12.5px;color:#111;white-space:nowrap">ҚАЗ</div>
<div class="abs" style="left:1250px;top:731px;width:62px;text-align:center;font-size:12px;color:#111;white-space:nowrap">18:29</div>
<div class="abs" style="left:1243px;top:749.5px;width:76px;text-align:center;font-size:11.6px;color:#111;white-space:nowrap">22.04.2021</div>
<svg style="left:1325px;top:740px" width="20" height="18" viewBox="0 0 20 18"><path d="M0 0h15v11H6l-4 4v-4H0z" fill="#000"/><path d="M2.5 3h10M2.5 5.5h10M2.5 8h10" stroke="#e8ddd5" stroke-width="1"/></svg>
<div class="abs" style="left:1332px;top:747px;width:17px;height:17px;border-radius:50%;background:#cfcac6;border:1px solid #8a8a8a;font-size:12px;color:#111;text-align:center;line-height:15px">2</div>
<div class="abs" style="left:1360px;top:728px;width:1px;height:40px;background:#cbbfb6"></div>

</body></html>
